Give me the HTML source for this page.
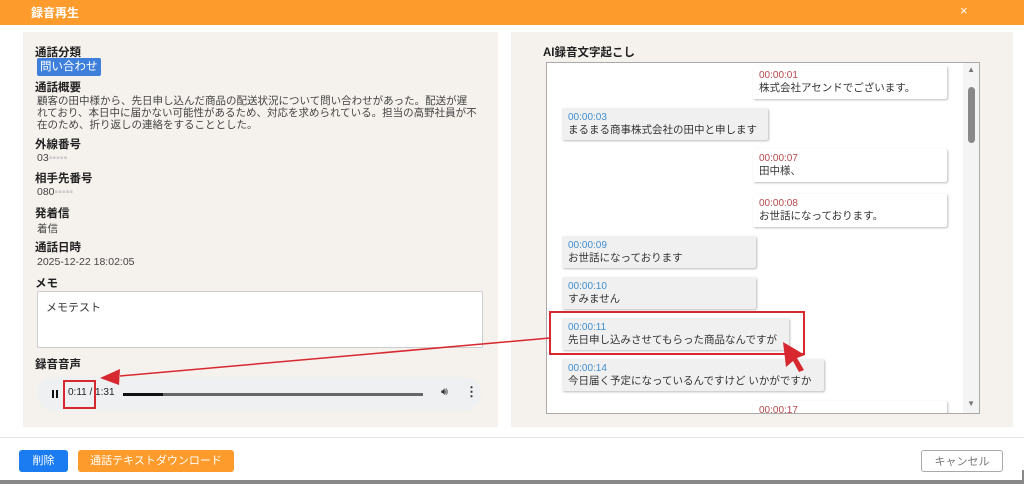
<!DOCTYPE html>
<html><head><meta charset="utf-8"><style>
*{box-sizing:border-box;margin:0;padding:0}
body{width:1024px;height:484px;overflow:hidden;background:#fff;font-family:"Liberation Sans","Noto Sans CJK JP",sans-serif;position:relative;color:#333}
.hdr{position:absolute;left:0;top:0;width:1024px;height:25px;background:#fd9c2c;color:#fff;font-size:12px;font-weight:bold}
.hdr .t{position:absolute;left:31px;top:4px}
.hdr .x{position:absolute;left:960px;top:3px;font-size:13px;font-weight:normal}
.lp{position:absolute;left:23px;top:32px;width:475px;height:395px;background:#f5f1ed}
.rp{position:absolute;left:511px;top:32px;width:502px;height:395px;background:#f5f1ed}
.lb{position:absolute;left:35px;font-size:11.5px;font-weight:bold;color:#222}
.v{position:absolute;left:37px;font-size:10.5px;color:#444}
.tag{position:absolute;left:37px;top:58px;background:#3e7fdc;color:#fff;font-size:11.5px;padding:1px 3px;border-radius:2px;line-height:16px}
.memo{position:absolute;left:37px;top:291px;width:446px;height:57px;background:#fff;border:1px solid #ccc;border-radius:2px;font-size:11px;padding:7px 8px}
.aud{position:absolute;left:37px;top:377px;width:444px;height:34px;background:#eef0f2;border-radius:17px}
.box{position:absolute;left:546px;top:62px;width:434px;height:352px;background:#fff;border:1px solid #aaa;overflow:hidden}
.b{position:absolute;font-size:10.5px;line-height:12px;padding:4px 6px;border-radius:2px;box-shadow:1px 1px 2px #bbb}
.b span{display:block;font-size:10px}
.r{background:#fff;left:206px;width:194px}
.r span{color:#b5484a}
.l{background:#f0f0f0;left:15px}
.l span{color:#3f8fd0}
.btn{position:absolute;top:450px;height:22px;font-size:11px;color:#fff;border-radius:3px;text-align:center;line-height:22px}
</style></head><body>
<div class="hdr"><span class="t">録音再生</span><span class="x">×</span></div>
<div class="lp"></div>
<div class="lb" style="top:44px">通話分類</div>
<div class="tag">問い合わせ</div>
<div class="lb" style="top:79px">通話概要</div>
<div class="v" style="top:95px;width:440px;line-height:12px">顧客の田中様から、先日申し込んだ商品の配送状況について問い合わせがあった。配送が遅れており、本日中に届かない可能性があるため、対応を求められている。担当の高野社員が不在のため、折り返しの連絡をすることとした。</div>
<div class="lb" style="top:136px">外線番号</div>
<div class="v" style="top:152px">03<span style="color:#ccc">▪▪▪▪▪</span></div>
<div class="lb" style="top:170px">相手先番号</div>
<div class="v" style="top:186px">080<span style="color:#ccc">▪▪▪▪▪</span></div>
<div class="lb" style="top:205px">発着信</div>
<div class="v" style="top:221px">着信</div>
<div class="lb" style="top:239px">通話日時</div>
<div class="v" style="top:256px">2025-12-22 18:02:05</div>
<div class="lb" style="top:275px">メモ</div>
<div class="memo">メモテスト</div>
<div class="lb" style="top:356px">録音音声</div>
<div class="aud">
<div style="position:absolute;left:15px;top:13px;width:2px;height:8px;background:#111"></div>
<div style="position:absolute;left:19px;top:13px;width:2px;height:8px;background:#111"></div>
<div style="position:absolute;left:31px;top:10px;font-size:10px;color:#222">0:11 / 1:31</div>
<div style="position:absolute;left:86px;top:16px;width:300px;height:3px;background:#666"></div>
<div style="position:absolute;left:86px;top:16px;width:40px;height:3px;background:#111"></div>
<div style="position:absolute;left:404px;top:9px;font-size:11px">🔊︎</div>
<div style="position:absolute;left:428px;top:7px;font-size:13px;font-weight:bold">⋮</div>
</div>
<div style="position:absolute;left:63px;top:380px;width:33px;height:29px;border:2px solid #d7282f"></div>
<div class="rp"></div>
<div class="lb" style="left:543px;top:44px">AI録音文字起こし</div>
<div class="box">
<div class="b r" style="top:3px;height:33px"><span>00:00:01</span>株式会社アセンドでございます。</div>
<div class="b l" style="top:45px;width:206px"><span>00:00:03</span>まるまる商事株式会社の田中と申します</div>
<div class="b r" style="top:86px;height:33px"><span>00:00:07</span>田中様、</div>
<div class="b r" style="top:131px;height:33px"><span>00:00:08</span>お世話になっております。</div>
<div class="b l" style="top:173px;width:194px"><span>00:00:09</span>お世話になっております</div>
<div class="b l" style="top:214px;width:194px"><span>00:00:10</span>すみません</div>
<div class="b l" style="top:255px;width:227px"><span>00:00:11</span>先日申し込みさせてもらった商品なんですが</div>
<div class="b l" style="top:296px;width:262px"><span>00:00:14</span>今日届く予定になっているんですけど いかがですか</div>
<div class="b r" style="top:338px;height:33px"><span>00:00:17</span></div>
<div style="position:absolute;right:0;top:0;width:16px;height:350px;background:#f4f4f4"></div>
<div style="position:absolute;right:4px;top:24px;width:7px;height:56px;background:#888;border-radius:4px"></div>
<div style="position:absolute;right:4px;top:2px;font-size:8px;color:#777">▲</div>
<div style="position:absolute;right:4px;top:336px;font-size:8px;color:#777">▼</div>
</div>
<div style="position:absolute;left:549px;top:311px;width:256px;height:44px;border:2.5px solid #d7282f"></div>
<svg style="position:absolute;left:0;top:0" width="1024" height="484"><line x1="120" y1="376" x2="550" y2="338" stroke="#d7282f" stroke-width="1.5"/><polygon points="100,378 120,369 119,385" fill="#d7282f"/><polygon points="783,342 805,355 797,358 804,370 799,372 793,361 786,367" fill="#d7282f"/></svg>
<div style="position:absolute;left:0;top:437px;width:1024px;height:1px;background:#e8e8e8"></div>
<div class="btn" style="left:19px;width:49px;background:#1a7cf0">削除</div>
<div class="btn" style="left:78px;width:156px;background:#fd9c2c">通話テキストダウンロード</div>
<div class="btn" style="left:921px;width:82px;background:#fff;border:1px solid #aaa;color:#777">キャンセル</div>
<div style="position:absolute;left:0;top:480px;width:1024px;height:4px;background:#888"></div>
<div style="position:absolute;left:1022px;top:470px;width:2px;height:14px;background:#888"></div>
</body></html>
